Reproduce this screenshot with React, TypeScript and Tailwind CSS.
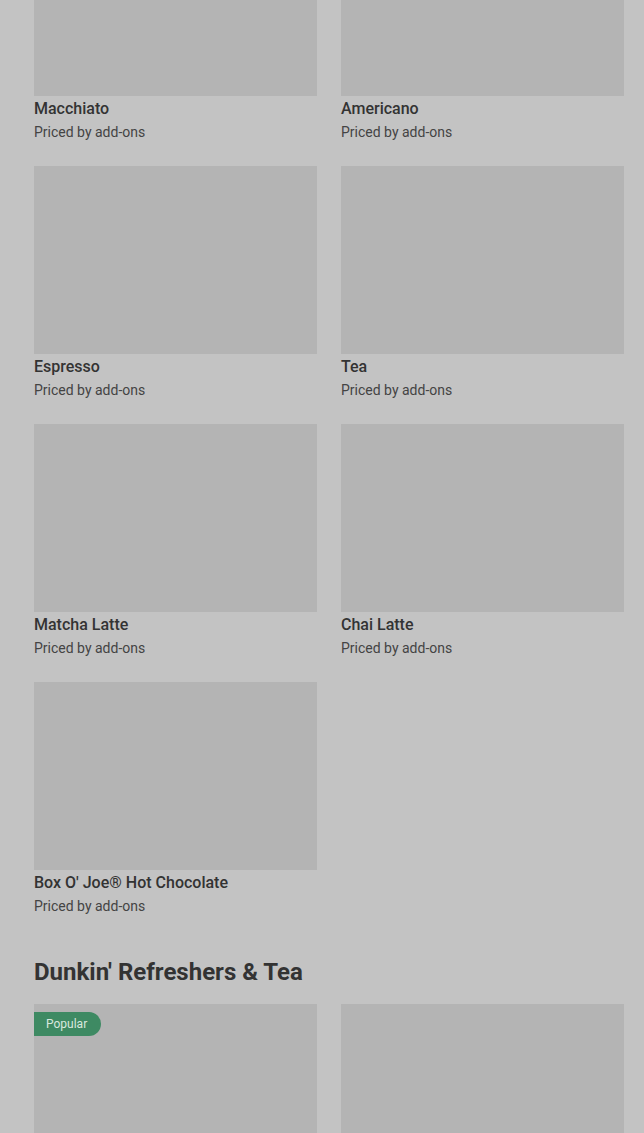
import React from "react";

type Item = { name: string; popular?: boolean };

const rows: Item[][] = [
  [{ name: "Macchiato" }, { name: "Americano" }],
  [{ name: "Espresso" }, { name: "Tea" }],
  [{ name: "Matcha Latte" }, { name: "Chai Latte" }],
  [{ name: "Box O' Joe® Hot Chocolate" }],
];

function Card({ item, imageOnly }: { item: Item; imageOnly?: boolean }) {
  return (
    <div className="flex flex-col">
      <div className="relative h-[188px] bg-[#b4b4b4]">
        {item.popular && (
          <span className="absolute left-0 top-[8px] h-[24px] pl-[12px] pr-[14px] flex items-center rounded-r-full bg-[#3e8a63] text-[12px] text-[#d9e8df]">
            Popular
          </span>
        )}
      </div>
      {!imageOnly && (
        <>
          <div className="mt-[3px] text-[16px] leading-[20px] font-medium text-[#333333]">{item.name}</div>
          <div className="mt-[3px] text-[14px] leading-[20px] text-[#444444]">Priced by add-ons</div>
        </>
      )}
    </div>
  );
}

export default function App() {
  return (
    <div
      className="h-[1133px] w-[644px] overflow-hidden bg-[#c3c3c3]"
      style={{ fontFamily: "Roboto, 'Noto Sans', sans-serif" }}
    >
      <div className="-mt-[92px] pl-[34px] pr-[20px]">
        <div className="flex flex-col gap-[24px]">
          {rows.map((r, i) => (
            <div key={i} className="grid grid-cols-2 gap-x-[24px]">
              {r.map((it) => (
                <Card key={it.name} item={it} />
              ))}
            </div>
          ))}
        </div>
        <h2 className="mt-[40px] text-[24px] leading-[32px] font-bold text-[#333333]">
          Dunkin' Refreshers &amp; Tea
        </h2>
        <div className="mt-[16px] grid grid-cols-2 gap-x-[24px]">
          <Card item={{ name: "Dunkin' Refresher", popular: true }} imageOnly />
          <Card item={{ name: "Iced Tea" }} imageOnly />
        </div>
      </div>
    </div>
  );
}
